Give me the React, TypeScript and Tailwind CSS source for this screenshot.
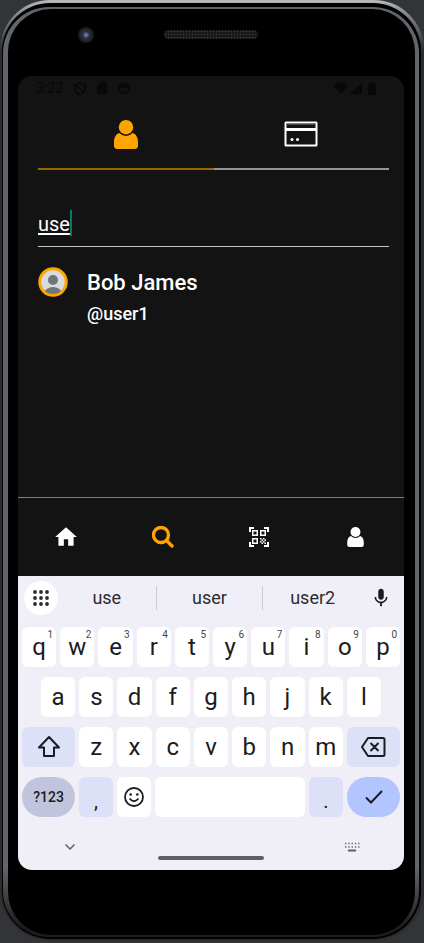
import { useState } from "react";
import type { ReactNode } from "react";
import { MdHome, MdMic, MdQrCodeScanner } from "react-icons/md";

function PersonIcon({ className }: { className: string }) {
  return (
    <svg viewBox="0 0 24 29" className={className} fill="currentColor" aria-hidden="true">
      <circle cx="12" cy="7.2" r="7.2" />
      <path d="M5.4 13a8.8 8.8 0 0 0 13.2 0c3.4.8 5.4 4.600 5.400 9v3c0 3-1 4-4 4H4c-3 0-4-1-4-4v-3c0-4.400 2-8.200 5.400-9z" />
    </svg>
  );
}

function CardIcon() {
  return (
    <svg viewBox="0 0 34 26" className="h-[26px] w-[34px]" aria-hidden="true">
      <rect x="1.500" y="1.500" width="31" height="23" rx="0.500" fill="none" stroke="#fff" strokeWidth="2" />
      <path d="M2 3h30" stroke="#777" strokeWidth="1" />
      <path d="M2 8.500h30" stroke="#fff" strokeWidth="3" />
      <circle cx="8" cy="18.500" r="1.500" fill="#fff" />
      <circle cx="13.500" cy="18.500" r="1.500" fill="#fff" />
    </svg>
  );
}

function Avatar() {
  return (
    <svg viewBox="0 0 30 30" className="size-[30px] shrink-0" role="img" aria-label="Bob James">
      <clipPath id="face">
        <circle cx="15" cy="15" r="12" />
      </clipPath>
      <circle cx="15" cy="15" r="13.200" fill="#d7dadf" stroke="#ffa500" strokeWidth="3" />
      <g clipPath="url(#face)" fill="#6f757d">
        <circle cx="15" cy="13" r="5" />
        <ellipse cx="15" cy="26" rx="8.500" ry="6" />
      </g>
    </svg>
  );
}

function StatusBar() {
  return (
    <div className="flex h-6 items-center justify-between pl-[18px] pr-7 text-[#080808]">
      <div className="flex items-center gap-[11px]">
        <span className="text-[14px] leading-4">3:22</span>
        <svg viewBox="0 0 12 13" className="h-[13px] w-3" fill="none" stroke="currentColor" strokeWidth="1.500" aria-hidden="true">
          <path d="M6 1 1 2.800v3.700c0 2.800 2 4.800 5 5.700 3-.9 5-2.900 5-5.700V2.800zM2 3l8 7" />
        </svg>
        <svg viewBox="0 0 10 12" className="h-3 w-2.5" fill="currentColor" aria-hidden="true">
          <path d="M4 0h5a1 1 0 0 1 1 1v10a1 1 0 0 1-1 1H1a1 1 0 0 1-1-1V4z" />
          <path d="M4.500 1.500v2M6.500 1.500v2M8.500 1.500v2" stroke="#131313" strokeWidth=".7" />
        </svg>
        <svg viewBox="0 0 12 12" className="size-3" aria-hidden="true">
          <circle cx="6" cy="6" r="5.300" fill="none" stroke="currentColor" strokeWidth="1.400" />
          <path d="M2 2.500h8l-.5 4-2-1.200L6 6.500 4.500 5.300l-2 1.200z" fill="currentColor" />
        </svg>
      </div>
      <div className="flex items-center gap-0.5">
        <svg viewBox="0 0 14 12" className="h-3 w-3.5" fill="currentColor" aria-hidden="true">
          <path d="M0 3.500C4-.8 10-.8 14 3.500L7 12z" />
        </svg>
        <svg viewBox="0 0 12 12" className="size-3" fill="currentColor" aria-hidden="true">
          <path d="M0 12 12 0v12z" />
        </svg>
        <svg viewBox="0 0 8 13" className="ml-1 h-[13px] w-2" fill="currentColor" aria-hidden="true">
          <path d="M2.500 0h3v1.500H8V13H0V1.500h2.500z" />
        </svg>
      </div>
    </div>
  );
}

const keyBase = "flex h-10 items-center justify-center rounded-md";

function LetterKey({ letter, hint }: { letter: string; hint?: string }) {
  return (
    <button type="button" className={`${keyBase} relative min-w-0 flex-1 bg-white text-[24px] leading-8`}>
      {letter}
      {hint && <span className="absolute right-[3px] top-0.5 text-[10px] leading-3 text-[#44464c]">{hint}</span>}
    </button>
  );
}

function SideKey({ label, className, children }: { label: string; className: string; children: ReactNode }) {
  return (
    <button type="button" aria-label={label} className={`${keyBase} w-[53px] shrink-0 ${className}`}>
      {children}
    </button>
  );
}

function Keyboard() {
  return (
    <div className="bg-[#f0eff7] text-[#1b1b21]">
      <div className="flex h-[51px] items-center pb-2 pl-1.5 pr-3">
        <button type="button" aria-label="Keyboard menu" className="grid size-[34px] shrink-0 place-items-center rounded-full bg-white">
          <svg viewBox="0 0 16 16" className="size-4" fill="#2b2b31" aria-hidden="true">
            {[2, 8, 14].map((y) => [2, 8, 14].map((x) => <circle key={`${x}-${y}`} cx={x} cy={y} r="1.900" />))}
          </svg>
        </button>
        <div className="mr-2 grid flex-1 grid-cols-[12fr_13fr_12fr] divide-x divide-[#cbcad1]">
          {["use", "user", "user2"].map((word) => (
            <button key={word} type="button" className="h-6 text-[18px] leading-6 text-[#2b2b31]">
              {word}
            </button>
          ))}
        </div>
        <button type="button" aria-label="Voice input" className="shrink-0">
          <MdMic className="size-[22px]" />
        </button>
      </div>
      <div className="flex flex-col gap-[10px] px-1">
        <div className="flex gap-1">
          {[..."qwertyuiop"].map((letter, i) => (
            <LetterKey key={letter} letter={letter} hint={String((i + 1) % 10)} />
          ))}
        </div>
        <div className="flex gap-1 px-[19px]">
          {[..."asdfghjkl"].map((letter) => (
            <LetterKey key={letter} letter={letter} />
          ))}
        </div>
        <div className="flex gap-1">
          <SideKey label="Shift" className="bg-[#dce1f8]">
            <svg viewBox="0 0 24 24" className="size-6" fill="none" stroke="currentColor" strokeWidth="2" strokeLinejoin="round" aria-hidden="true">
              <path d="M12 2 2 12.500h5V21h10v-8.500h5z" />
            </svg>
          </SideKey>
          {[..."zxcvbnm"].map((letter) => (
            <LetterKey key={letter} letter={letter} />
          ))}
          <SideKey label="Backspace" className="bg-[#dce1f8]">
            <svg viewBox="0 0 26 22" className="h-[22px] w-[26px]" fill="none" stroke="currentColor" strokeWidth="2" strokeLinejoin="round" aria-hidden="true">
              <path d="M8 2h15q1.500 0 1.500 1.500v15q0 1.500-1.500 1.500H8l-6-9zM10.500 7l8 8M18.500 7l-8 8" />
            </svg>
          </SideKey>
        </div>
        <div className="flex gap-1">
          <button type="button" className="h-10 w-[53px] shrink-0 rounded-full bg-[#c0c5dd] text-[14px] font-medium leading-5">
            ?123
          </button>
          <button type="button" className="h-10 w-[34px] rounded-md bg-[#dce1f8] pt-2 text-[20px] leading-6">
            ,
          </button>
          <button type="button" aria-label="Emoji" className={`${keyBase} w-[34px] bg-white`}>
            <svg viewBox="0 0 20 20" className="size-5" fill="none" stroke="currentColor" strokeWidth="1.800" aria-hidden="true">
              <circle cx="10" cy="10" r="9" />
              <path d="M5.500 11.500q4.500 5.500 9 0" />
              <circle cx="6.700" cy="7.500" r="1.300" fill="currentColor" stroke="none" />
              <circle cx="13.300" cy="7.500" r="1.300" fill="currentColor" stroke="none" />
            </svg>
          </button>
          <button type="button" aria-label="Space" className="h-10 flex-1 rounded-md bg-white" />
          <button type="button" className="h-10 w-[34px] rounded-md bg-[#dce1f8] pt-2 text-[20px] leading-6">
            .
          </button>
          <button type="button" aria-label="Done" className="grid h-10 w-[53px] shrink-0 place-items-center rounded-full bg-[#b3c5ff]">
            <svg viewBox="0 0 18 14" className="h-3.5 w-[18px]" fill="none" stroke="currentColor" strokeWidth="2" aria-hidden="true">
              <path d="m1 7.500 5 5L17 1" />
            </svg>
          </button>
        </div>
      </div>
      <div className="grid h-[53px] grid-cols-[1fr_106px_1fr] pt-6">
        <button type="button" aria-label="Hide keyboard" className="ml-[47px] h-3 w-[10px]">
          <svg viewBox="0 0 10 6" className="h-1.5 w-2.5" fill="none" stroke="#5f5f66" strokeWidth="1.500" aria-hidden="true">
            <path d="m.5.5 4.500 4.500L9.500.5" />
          </svg>
        </button>
        <span className="mt-[15px] h-1 rounded-full bg-[#5f5f63]" />
        <button type="button" aria-label="Switch keyboard" className="mr-[44px] h-3 w-4 justify-self-end">
          <svg viewBox="0 0 16 10" className="h-2.5 w-4" stroke="#5f5f66" aria-hidden="true">
            <path d="M1 1.500h15M1 5h15" strokeWidth="1.300" strokeDasharray="1.300 2" />
            <path d="M4 8.500h8" strokeWidth="1.800" />
          </svg>
        </button>
      </div>
    </div>
  );
}

function Screen() {
  const [query, setQuery] = useState("use");
  return (
    <main className="flex flex-1 flex-col overflow-hidden rounded-[14px] bg-[#131313] text-white">
      <StatusBar />
      <div className="flex flex-1 flex-col pl-5 pr-[15px]">
        <div className="grid h-[70px] grid-cols-2">
          <button type="button" aria-label="People" className="grid place-items-center border-b-2 border-[#9b6500] text-[#ffa500]">
            <PersonIcon className="h-[29px] w-6" />
          </button>
          <button type="button" aria-label="Cards" className="grid place-items-center border-b-2 border-[#959595]">
            <CardIcon />
          </button>
        </div>
        <label className="mt-10 flex h-[37px] items-start border-b border-[#c4c4c4]">
          <input
            aria-label="Search users"
            value={query}
            onChange={(e) => setQuery(e.target.value)}
            className="h-[28px] bg-transparent text-[20px] leading-7 underline underline-offset-2 outline-none [field-sizing:content]"
          />
          <span className="h-[26px] w-0.5 bg-[#08776b]" />
        </label>
        <div className="mt-5 flex gap-[19px]">
          <Avatar />
          <div>
            <p className="text-[22px] font-medium leading-8">Bob James</p>
            <p className="text-[18px] font-medium leading-[30px]">@user1</p>
          </div>
        </div>
      </div>
      <nav className="grid h-[79px] grid-cols-4 border-t border-[#7e7e7e]">
        <a href="#home" aria-label="Home" className="grid place-items-center">
          <MdHome className="size-[26px]" />
        </a>
        <a href="#search" aria-label="Search" className="grid place-items-center text-[#ffa500]">
          <svg viewBox="0 0 22 22" className="size-[22px]" fill="none" stroke="currentColor" strokeWidth="3.300" strokeLinecap="round" aria-hidden="true">
            <circle cx="9" cy="9" r="7.500" />
            <path d="m15 15 5 5" />
          </svg>
        </a>
        <a href="#scan" aria-label="Scan" className="grid place-items-center">
          <MdQrCodeScanner className="size-6" />
        </a>
        <a href="#profile" aria-label="Profile" className="grid place-items-center">
          <PersonIcon className="h-5 w-[17px]" />
        </a>
      </nav>
      <Keyboard />
    </main>
  );
}

export default function App() {
  return (
    <div className="flex min-h-screen flex-col bg-[#333437] pb-0.5 font-[Roboto,sans-serif]">
      <div className="flex flex-1 flex-col rounded-[50px] bg-[linear-gradient(to_bottom,#b9bdbd_0,#8a8d8d_12px,#2b2d2e_50px,#2b2d2e_100%)] pb-0.5 pl-0.5 pr-[3px] pt-[3px]">
        <div className="flex flex-1 flex-col rounded-[48px] bg-black pb-0.5 pl-px pr-0.5 pt-1">
          <div className="flex flex-1 flex-col rounded-[46px] bg-[linear-gradient(to_bottom,#62656c_0,#62656c_860px,#1c1c1c_920px)] pb-0.5 pl-[5px] pr-1 pt-0.5">
            <div className="flex flex-1 flex-col rounded-[43px] bg-black pb-[65px] pl-2.5 pr-[11px]">
              <div className="grid h-[67px] grid-cols-[1fr_94px_1fr] pt-[18px]">
                <span className="ml-[60px] grid size-4 place-items-center rounded-full border-2 border-[#1c1c1c] bg-[#2c2c2e]">
                  <span className="size-1.5 rounded-full bg-[radial-gradient(#7783c8,#20284f)]" />
                </span>
                <span className="mt-[3px] h-[9px] rounded-full bg-[#1a1a1a] bg-[radial-gradient(#454747_35%,transparent_40%)] bg-[length:3px_3px]" />
              </div>
              <Screen />
            </div>
          </div>
        </div>
      </div>
    </div>
  );
}
